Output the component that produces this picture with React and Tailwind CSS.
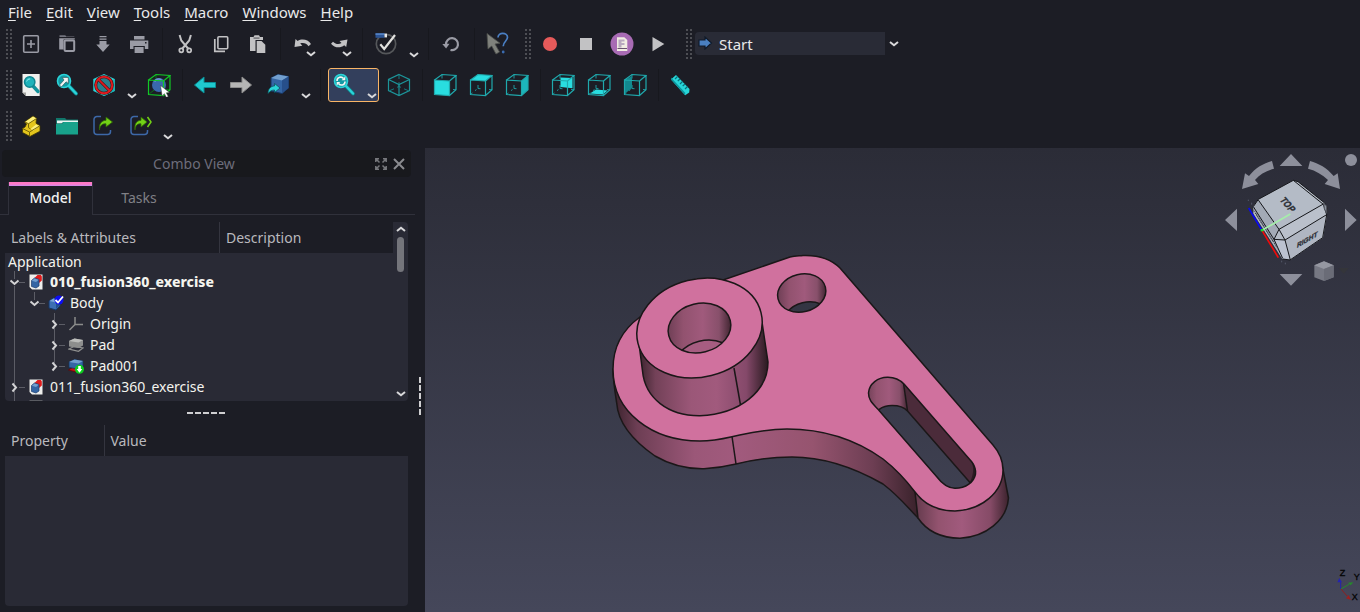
import React from "react";

/* ---------- toolbar icons, all drawn in a 24 x 24 box ---------- */

function Svg({ children, size = 24 }) {
  return (
    <svg width={size} height={size} viewBox="0 0 24 24" fill="none" aria-hidden="true" className="shrink-0">
      {children}
    </svg>
  );
}

const G = "#9a9ba5";
const L = "#c2c2c4";
const TEAL = "#2ad4d9";

const NewIcon = () => (
  <Svg>
    <rect x="4.700" y="3.800" width="14.600" height="16.400" rx="1" stroke={G} strokeWidth="1.600" />
    <path d="M12 8v8M8 12h8" stroke={G} strokeWidth="1.600" />
  </Svg>
);
const OpenIcon = () => (
  <Svg>
    <path d="M4.500 5V3.300h5.800l1 1.200h8V5z" fill="#72737d" />
    <path d="M4.200 6.200h15.600v1.200H8.600v10.200H4.200z" fill={G} />
    <rect x="9.600" y="8.600" width="9.600" height="10.400" rx="1" stroke={G} strokeWidth="2" />
  </Svg>
);
const SaveIcon = () => (
  <Svg>
    <path d="M8.500 4.700h7M8.500 7.200h7" stroke={G} strokeWidth="1.300" />
    <path d="M8.500 9h7v3.500h3.200L12 20 5.300 12.500h3.200z" fill={G} />
  </Svg>
);
const PrintIcon = () => (
  <Svg>
    <path d="M7 4h10.500v3.500H7zM3 8.500h18.300V17h-3.500v-3H6.500v3H3z" fill={G} />
    <rect x="7.600" y="15" width="9" height="6" fill={G} />
    <rect x="18" y="10" width="1.500" height="1.500" fill="#1c1d25" />
  </Svg>
);
const CutIcon = () => (
  <Svg>
    <path d="M6.600 3l1.700 5.500L15.500 17M17.900 3l-1.700 5.500L9 17" stroke={L} strokeWidth="2" />
    <circle cx="8.300" cy="18.300" r="2" stroke={L} strokeWidth="1.700" />
    <circle cx="16.200" cy="18.300" r="2" stroke={L} strokeWidth="1.700" />
  </Svg>
);
const CopyIcon = () => (
  <Svg>
    <rect x="8.900" y="4.700" width="9.800" height="12" rx="1" stroke={L} strokeWidth="1.600" />
    <path d="M5.800 7v12.300H16" stroke={L} strokeWidth="1.700" />
  </Svg>
);
const PasteIcon = () => (
  <Svg>
    <path d="M5 5h3.500l1-1.800h4.500l1 1.800H18v3h-7.500v11H5z" fill={L} />
    <path d="M11.700 9h4.800l3.800 3.800V21h-8.600z" fill={L} />
    <path d="M8.500 5.400h6v1.400h-6z" fill="#6a6a70" />
  </Svg>
);
const UndoIcon = () => (
  <Svg>
    <path d="M3.500 15l1-8 2.200 1.900C10.500 6.500 17 7 20 12l-2.500 2.300C15.500 11 12.500 10.300 9.200 11.300L11.300 13.700z" fill={L} />
  </Svg>
);
const RedoIcon = () => (
  <Svg>
    <path d="M20.500 7.500l-1.300 7.500-2-1.800C13.500 16.500 7.500 16 4 11.700l2-2C9 12.500 12 12.500 14.500 11l-2-2z" fill={L} />
  </Svg>
);
const CheckIcon = () => (
  <Svg>
    <circle cx="12" cy="12" r="9.700" stroke="#55575a" strokeWidth="1.700" />
    <path d="M1.500 1.300h9v4.500h-9z" fill="#2c5596" />
    <path d="M1.500 1.300h9v1.600h-9z" fill="#5684c4" />
    <path d="M10.500 1.600h2.500v3.800h-2.500z" fill="#e8e8e8" />
    <path d="M6.300 12.300L10.200 17 21 3" stroke="#e2e2df" strokeWidth="2.200" />
  </Svg>
);
const RefreshIcon = () => (
  <Svg>
    <path d="M7 12.500a6 6 0 1 1 4.500 5.500" stroke={G} strokeWidth="2.200" />
    <path d="M3.300 12l7.200-.3-3.400 4.700z" fill={G} />
  </Svg>
);
const WhatsThisIcon = () => (
  <Svg>
    <path d="M2 1.500l13 9.700-5 .8 4.500 8-3.500 2-4.300-8L3 17z" fill="#7f817c" stroke="#4d4f4b" strokeWidth=".8" />
    <path d="M13 5.500c0-5.800 9.500-5.300 9.500-.2 0 4-4.300 4-4.300 9" stroke="#4a7fc4" strokeWidth="1.700" />
    <circle cx="18.200" cy="20" r="1.400" fill="#3b6cb0" />
  </Svg>
);
const RecordIcon = () => (
  <Svg>
    <circle cx="12" cy="12" r="7" fill="#e65a5a" />
  </Svg>
);
const StopIcon = () => (
  <Svg>
    <path d="M6 6h12v12H6z" fill={L} />
  </Svg>
);
const MacroIcon = () => (
  <Svg>
    <circle cx="12" cy="12" r="11.500" fill="#a86bb4" />
    <path d="M7 5.300h7.300L17.300 8v11H7z" fill="#f1ece3" />
    <path d="M8.500 7.500h6v2h-3v1.500h3v2h-3v2.500h-3z" fill="#b9a9bf" />
    <path d="M7.500 16.500h9.500" stroke="#6a5470" />
  </Svg>
);
const PlayIcon = () => (
  <Svg>
    <path d="M6.500 5v14.200L18.300 12z" fill={L} />
  </Svg>
);

function Lens({ children, cx = 9, cy = 8 }) {
  return (
    <>
      <path d={`M${cx + 4} ${cy + 4}L${cx + 12} ${cy + 12.5}`} stroke="#0f7d86" strokeWidth="4" strokeLinecap="round" />
      <path d={`M${cx + 4} ${cy + 4}L${cx + 12} ${cy + 12.5}`} stroke={TEAL} strokeWidth="2.500" strokeLinecap="round" />
      <circle cx={cx} cy={cy} r="6.500" fill="#139aa3" stroke={TEAL} strokeWidth="1.600" />
      {children}
    </>
  );
}
const FitAllIcon = () => (
  <Svg>
    <path d="M3.500 1h17.200v22H7l-3.500-3.500z" fill="#f0f0ee" />
    <path d="M3.500 19.500H7V23z" fill="#a3a4a0" />
    <path d="M14 13l5 5.500" stroke="#12929b" strokeWidth="3.400" strokeLinecap="round" />
    <circle cx="10.700" cy="9" r="5.200" fill="#1fb3bb" stroke="#118690" strokeWidth="1.500" />
    <path d="M7.600 8.500c.5-1.800 2-2.700 3.600-2.500" stroke="#8ceaee" />
  </Svg>
);
const FitSelectionIcon = () => (
  <Svg>
    <Lens>
      <path d="M4.500 12l4.500-5L7.300 4.500h6v6l-2.200-1.700-4.800 5.200z" fill="#f4f5f4" stroke="#2c5053" strokeWidth=".6" />
    </Lens>
  </Svg>
);
const SyncViewIcon = () => (
  <Svg>
    <Lens>
      <path d="M5 8c0-4 4.500-5 6.500-2.500M13 8.500c0 4-4.500 4.500-6.500 2" stroke="#f4f5f4" strokeWidth="1.600" />
      <path d="M13.300 3.500v3.700H9.600zM4.700 12.500V9h3.600z" fill="#f4f5f4" />
    </Lens>
  </Svg>
);
const DrawStyleIcon = () => (
  <Svg>
    <path d="M12 1l10.700 5v12L12 23 1.300 18V6z" fill={TEAL} />
    <path d="M12 12v11l10.700-5V6z" fill="#18b3b9" />
    <circle cx="12" cy="12" r="7" fill="#2c7f8b" />
    <circle cx="12" cy="12" r="8.300" stroke="#4a0808" strokeWidth="3" />
    <path d="M6.200 6.200l11.600 11.600" stroke="#4a0808" strokeWidth="3" />
    <circle cx="12" cy="12" r="8.300" stroke="#e01b1f" strokeWidth="1.900" />
    <path d="M6.200 6.200l11.600 11.600" stroke="#e01b1f" strokeWidth="1.900" />
  </Svg>
);
const BoxSelectIcon = () => (
  <Svg>
    <path d="M9 1.500v14l-7.500 6M9 15.500l14 1.300" stroke="#086f1b" />
    <circle cx="12" cy="12" r="7" fill="#3a68ad" />
    <path d="M7.500 8.500c2-3 5-3 7-1.500" stroke="#6d97d2" strokeWidth="1.500" />
    <path d="M1.500 7l15 1v14.500l-15-1zM1.500 7L9 1.500l14 1L16.500 8M23 2.500v14.300l-6.500 5.700" stroke="#12c826" strokeWidth="1.200" />
    <path d="M13.500 12.500l9 7-3.200.3 2 3.700-2 .9-1.900-3.700-2.300 2.200z" fill="#fff" stroke="#333" strokeWidth=".5" />
  </Svg>
);
const BackIcon = () => (
  <Svg>
    <path d="M1.500 12L11 4v5.500h11.500v5H11V20z" fill="#1fc9ce" stroke="#0b8f97" />
  </Svg>
);
const ForwardIcon = () => (
  <Svg>
    <path d="M22.500 12L13 4v5.500H1.500v5H13V20z" fill="#b5b5b5" stroke="#8c8c8c" />
  </Svg>
);
const LinkNavIcon = () => (
  <Svg>
    <path d="M5 5l7-3.500 10.500 2V15L16 20.500 5 18z" fill="#3465a4" stroke="#16335d" />
    <path d="M5 5l7-3.500 10.500 2L16 7.500z" fill="#729fcf" />
    <path d="M16 7.500l6.500-4V15L16 20.500z" fill="#274f8a" />
    <path d="M2 20.500c0-5 3-7.500 6.500-7.500v-2.500L14 15l-5.500 4.500V17C6 17 4 18 2 20.500z" fill={TEAL} stroke="#0a4d54" strokeWidth=".7" />
  </Svg>
);
const IsoIcon = () => (
  <Svg>
    <path d="M12 2v4M12 9v4M3 17.500l4-1.700M21 17.500l-4-1.700M10 14.300l2-.8 2 .8" stroke="#15777d" />
    <path d="M12 1.500L22.500 6.500v11L12 22.500l-10.500-5v-11zM1.500 6.500L12 11.500l10.500-5M12 11.500v11" stroke="#1c9499" strokeWidth="1.200" />
  </Svg>
);

const FACES = {
  front: "M1.500 7l15 1v14.500l-15-1z",
  top: "M1.500 7L9 1.500l14 1L16.500 8z",
  right: "M16.500 8L23 2.500v14.300l-6.500 5.700z",
  rear: "M9.500 4.500l12 .5v10.300l-12-1.300z",
  bottom: "M3 20.500l6-4 11.500 1-4.500 4z",
  left: "M1.500 7L9 3v12l-7.500 6z",
};
function CubeIcon({ face }) {
  const fill = face === "left" ? "#12888e" : face === "right" ? "#1cb5bb" : "#29dde0";
  return (
    <Svg>
      <path d="M9 1.500v4M9 12v3.500M7.500 16.600l-1.500 1M3.500 20l-2 1.500M9 15.500l2.500.2M20 16.500l3 .3" stroke="#1c989d" />
      <path d={FACES[face]} fill={fill} />
      <path d="M1.500 7l15 1v14.500l-15-1zM1.500 7L9 1.500l14 1L16.500 8M23 2.500v14.300l-6.500 5.700" stroke="#1fa9ad" strokeWidth="1.200" />
    </Svg>
  );
}
const MeasureIcon = () => (
  <Svg>
    <path d="M2 6.500L7 2l13.500 14-.3 3.500-4 2.800z" fill="#27d6d9" />
    <path d="M2 6.500l14.200 15.800v-2.500L2 4.500z" fill="#0e939b" />
    <path d="M8.500 3.500L6 6M11 6L8.800 8M13.500 8.500L11 11M16 11l-2.300 2M18.500 13.500L16 16" stroke="#08727a" strokeWidth="1.200" />
  </Svg>
);
const PartIcon = () => (
  <Svg>
    <path d="M3.500 14.500L6 13l1.500-3L5.500 8 14 2l3.500 2.200-.5 5 4 2.500v5.500L11 22.500 3.500 18.500z" fill="#e3c51c" stroke="#3f3603" strokeWidth=".8" />
    <path d="M6 8l8-5.500 3.500 2L9.500 9.500zM11.500 15l5.500-4.500 3.500 1.500-6 4.500z" fill="#fdf07a" />
    <path d="M6 8l3.500 1.700v4l2 1.300M17.500 4.500l-8 5.200M3.500 14.500l7 3.500 10-6M10.500 18v4.500" stroke="#6b5b06" strokeWidth=".9" />
  </Svg>
);
const GroupIcon = () => (
  <Svg>
    <path d="M1 4h9l1.500 1.500H23V9H1z" fill="#11766a" />
    <path d="M2 6.500h21V8H8L6.500 9.500H2z" fill="#e9f5f2" />
    <path d="M1 9.500h6L9 8h14v12.500H1z" fill="#18a28b" />
  </Svg>
);
function LinkIcon({ extra }) {
  return (
    <Svg>
      <path d="M10 2.500H6a3 3 0 0 0-3 3v12a3 3 0 0 0 3 3h10.500a3 3 0 0 0 3-3V16" stroke="#3d68a8" strokeWidth="1.500" />
      <path
        d={
          extra
            ? "M7 16c-.8-6 1.500-9.500 6-9.700V3l6 5-6 5v-3.200c-4-.1-5.500 1.700-6 6.200z"
            : "M8.500 16c-.8-6 2-9.500 6.500-9.700V3l6.500 5-6.500 5v-3.200c-4-.1-6 1.700-6.500 6.200z"
        }
        fill="#73d216"
        stroke="#2f6605"
        strokeWidth=".8"
      />
      {extra && <path d="M19.500 3l3.500 5-3.500 5" stroke="#73d216" strokeWidth="1.500" />}
    </Svg>
  );
}

function Chevron({ className = "" }) {
  return (
    <svg width="10" height="6" viewBox="0 0 10 6" fill="none" aria-hidden="true" className={className}>
      <path d="M1 1l4 3.300L9 1" stroke="#d8d8da" strokeWidth="2" />
    </svg>
  );
}

/* ---------- toolbar building blocks ---------- */

function Grip() {
  return (
    <svg width="6" height="30" viewBox="0 0 6 30" aria-hidden="true" className="shrink-0">
      {[0, 4, 8, 12, 16, 20, 24, 28].map((y) => (
        <path key={y} d={`M0 ${y}h2v2H0zM4 ${y}h2v2H4z`} fill="#4d4e54" />
      ))}
    </svg>
  );
}

function Bar({ label, children }) {
  return (
    <div role="toolbar" aria-label={label} className="flex h-[41px] items-center gap-0.5 pr-[5px] pl-1.5">
      <Grip />
      {children}
    </div>
  );
}

function Sep() {
  return (
    <div className="flex w-2 justify-center">
      <div className="h-8 w-px bg-[#17181e]" />
    </div>
  );
}

function Btn({ label, children }) {
  return (
    <button type="button" aria-label={label} className="flex size-[34px] items-center justify-center rounded-sm">
      {children}
    </button>
  );
}

function CornerBtn({ label, children }) {
  return (
    <button type="button" aria-label={label} className="relative flex size-[34px] items-center justify-center rounded-sm">
      {children}
      <Chevron className="absolute right-1 bottom-1" />
    </button>
  );
}

function SplitBtn({ label, active, children }) {
  return (
    <button
      type="button"
      aria-label={label}
      className={
        "mr-px ml-0.5 flex h-[34px] w-[51px] items-center justify-between rounded-[3px] border pr-px pl-[3px] " +
        (active ? "border-[#f9b566] bg-[#333f5c]" : "border-transparent")
      }
    >
      {children}
      <Chevron className="mt-[22px]" />
    </button>
  );
}

/* ---------- tree ---------- */

function DocIcon({ grey }) {
  return (
    <svg width="14" height="16" viewBox="0 0 14 16" aria-hidden="true">
      <path d="M.5 .5h13v15H3L.5 13z" fill={grey ? "#8c8d90" : "#eeeeec"} />
      {!grey && (
        <>
          <path d="M5.500 4L8.500 1H12l.8 1.500v4L10 9z" fill="#e01b1b" />
          <path d="M2.500 6.500L5.500 4 10 5.500V12l-3 2-4.500-1.500z" fill="#3465a4" stroke="#1c3d6e" strokeWidth=".7" />
          <path d="M2.800 6.700l2.800-2.200L9.700 5.700 7 8z" fill="#729fcf" />
        </>
      )}
    </svg>
  );
}
const BodyIcon = () => (
  <svg width="16" height="16" viewBox="0 0 16 16" aria-hidden="true">
    <path d="M1 6l4-3 7 1v7l-4 4-7-2z" fill="#3d6fb3" stroke="#173562" />
    <path d="M1.500 6l4-2.500L11 4.500 8 7.500z" fill="#7aa5d8" />
    <path d="M8 7.500V14l3.500-3.500V5z" fill="#24508c" />
    <circle cx="11" cy="5" r="4.500" fill="#0d0df2" />
    <path d="M7.500 5l2.500 2.500L15 1.500" stroke="#fff" strokeWidth="1.800" fill="none" />
  </svg>
);
const OriginIcon = () => (
  <svg width="16" height="16" viewBox="0 0 16 16" fill="none" aria-hidden="true">
    <path d="M7 1v7.500h8M7 8.500L1.500 14" stroke="#8b8c8b" strokeWidth="1.500" />
  </svg>
);
const PadGreyIcon = () => (
  <svg width="16" height="16" viewBox="0 0 16 16" aria-hidden="true">
    <path d="M1 12l5-2.500L15 11l-4.500 3.300z" fill="none" stroke="#8f908f" strokeWidth="1.200" />
    <path d="M1 4l5.500-2.500L15 3v5.500L10.500 11 1 9.500z" fill="#8d8e8d" />
    <path d="M1 4l5.500-2.500L15 3l-4.500 2.500z" fill="#bcbdbb" />
  </svg>
);
const PadTipIcon = () => (
  <svg width="16" height="16" viewBox="0 0 16 16" aria-hidden="true">
    <path d="M.5 12l4-2.500h7L8 14z" fill="#c11414" stroke="#5c0606" strokeWidth=".7" />
    <path d="M1 4l5.500-2.500L15 3v5.500L10.500 11 1 9.500z" fill="#3465a4" stroke="#16335d" strokeWidth=".7" />
    <path d="M1 4l5.500-2.500L15 3l-4.500 2.500z" fill="#729fcf" />
    <circle cx="11.500" cy="11.300" r="4.500" fill="#0ccf1d" />
    <path d="M10.200 8h2.600v3h1.500l-2.800 3.800L8.700 11h1.500z" fill="#fff" />
  </svg>
);

/* One 20px indent cell of the tree: guide lines plus an optional arrow. */
function Cell({ kind = "", up, down }) {
  return (
    <svg width="20" height="21" viewBox="0 0 20 21" fill="none" aria-hidden="true" className="shrink-0">
      {up && <path d="M9.500 0v8" stroke="#5c5d66" />}
      {down && <path d="M9.500 15v6" stroke="#5c5d66" />}
      {kind === "line" && <path d="M9.500 0v21" stroke="#5c5d66" />}
      {(kind === "open" || kind === "closed") && <path d="M14 11.500h6" stroke="#5c5d66" />}
      {kind === "open" && <path d="M5.500 9.500l4 3.500 4-3.500" stroke="#d2d2d4" strokeWidth="2" />}
      {kind === "closed" && <path d="M7.500 7.500l3.500 4-3.500 4" stroke="#d2d2d4" strokeWidth="2" />}
    </svg>
  );
}

const ROWS = [
  { cells: [{ kind: "open", up: true, down: true }], icon: <DocIcon />, text: "010_fusion360_exercise", bold: true, level: 1 },
  { cells: [{ kind: "line" }, { kind: "open", up: true }], icon: <BodyIcon />, text: "Body", level: 2 },
  { cells: [{ kind: "line" }, {}, { kind: "closed", up: true, down: true }], icon: <OriginIcon />, text: "Origin", level: 3 },
  { cells: [{ kind: "line" }, {}, { kind: "closed", up: true, down: true }], icon: <PadGreyIcon />, text: "Pad", level: 3 },
  { cells: [{ kind: "line" }, {}, { kind: "closed", up: true }], icon: <PadTipIcon />, text: "Pad001", level: 3 },
  { cells: [{ kind: "closed", up: true, down: true }], icon: <DocIcon />, text: "011_fusion360_exercise", level: 1 },
  { cells: [{ kind: "line" }], icon: <DocIcon grey />, text: "", level: 1 },
];

function Tree() {
  return (
    <div className="mt-[7px] mr-[7px] ml-[5px] flex">
      <div className="flex min-w-0 flex-1 flex-col">
        <div className="flex h-[31px] text-[#b9b9bd]">
          <div className="flex w-[215px] items-center border-r border-[#34353f] pl-1.5">Labels &amp; Attributes</div>
          <div className="flex items-center pl-1.5">Description</div>
        </div>
        <div role="tree" aria-label="Model tree" className="h-[148px] overflow-hidden rounded-bl bg-[#292a35] text-[#f4f4ee]">
          <div className="flex h-[18px] items-center pl-[3px]">Application</div>
          {ROWS.map((r, i) => (
            <div role="treeitem" aria-level={r.level} key={i} className="flex h-[21px] items-center">
              {r.cells.map((c, j) => (
                <Cell key={j} {...c} />
              ))}
              <span className="flex w-[22px] justify-center">{r.icon}</span>
              <span className={r.bold ? "pl-[3px] font-extrabold" : "pl-[3px]"}>{r.text}</span>
            </div>
          ))}
        </div>
      </div>
      <div className="flex w-[15px] flex-col items-center justify-between rounded-r bg-[#292a35] py-1">
        <div className="flex flex-col items-center gap-[5px]">
          <Chevron className="rotate-180" />
          <div className="h-[35px] w-[7px] rounded-full bg-[#74757b]" />
        </div>
        <Chevron />
      </div>
    </div>
  );
}

function ComboView() {
  return (
    <aside className="flex w-[425px] shrink-0 text-sm">
      <div className="flex min-w-0 flex-1 flex-col pb-1.5">
        <div className="mt-0.5 mr-1 ml-0.5 flex h-[27px] items-center rounded bg-[#18191d] pr-[3px]">
          <h2 className="flex-1 pl-3.5 text-center text-[#6d6d7b]">Combo View</h2>
          <button type="button" aria-label="Float panel" className="flex w-[18px] justify-center">
            <svg width="12" height="12" viewBox="0 0 12 12" fill="none" stroke="#77787c" strokeWidth="1.500">
              <path d="M.8 4V.8H4M8 .8h3.200V4M11.200 8v3.200H8M4 11.200H.8V8M1 1l3.500 3.500M11 1L7.500 4.500M11 11L7.500 7.500M1 11l3.500-3.500" />
            </svg>
          </button>
          <button type="button" aria-label="Close panel" className="flex w-[18px] justify-center">
            <svg width="12" height="12" viewBox="0 0 12 12" fill="none" stroke="#8a8b8f" strokeWidth="2">
              <path d="M1 1l10 10M11 1L1 11" />
            </svg>
          </button>
        </div>
        <div role="tablist" className="mt-[5px] flex h-[33px]">
          <div className="w-2 border-b border-[#30313b]" />
          <button type="button" role="tab" aria-selected="true" className="flex w-[85px] flex-col border-x border-[#30313b] text-[#f2f2f2]">
            <span className="h-1 w-full bg-linear-to-b from-[#ff79c6] from-50% to-[#c78bf0]" />
            <span className="w-full pt-0.5 text-center font-medium">Model</span>
          </button>
          <button type="button" role="tab" aria-selected="false" className="flex w-[92px] flex-col border-b border-[#30313b] text-[#808086]">
            <span className="w-full pt-1.5 text-center">Tasks</span>
          </button>
          <div className="flex-1 border-b border-[#30313b]" />
        </div>
        <Tree />
        <div className="flex h-6 items-center justify-center gap-0.5 pr-1">
          {[0, 1, 2, 3, 4].map((i) => (
            <span key={i} className="h-0.5 w-1.5 bg-[#cfcfd1]" />
          ))}
        </div>
        <div className="mr-[7px] ml-[5px] flex flex-1 flex-col">
          <table className="w-full table-fixed text-left text-[#b9b9bd]">
            <thead>
              <tr className="h-[31px]">
                <th scope="col" className="w-[99px] border-r border-[#34353f] pl-1.5 font-normal">Property</th>
                <th scope="col" className="pl-1.5 font-normal">Value</th>
              </tr>
            </thead>
          </table>
          <div className="min-h-[149px] flex-1 rounded-b bg-[#292a35]" />
        </div>
      </div>
      <div className="flex w-2.5 flex-col items-center justify-center gap-0.5 pt-8">
        {[0, 1, 2, 3, 4].map((i) => (
          <span key={i} className="h-1.5 w-0.5 bg-[#cfcfd1]" />
        ))}
      </div>
    </aside>
  );
}

/* ---------- 3D view ---------- */

const EDGE = { stroke: "#1b1718", strokeWidth: 1.5, strokeLinejoin: "round" };

function Model() {
  return (
    <svg viewBox="425 148 935 464" aria-label="3D model" className="absolute inset-0 size-full">
      <defs>
        <linearGradient id="sideA" gradientUnits="userSpaceOnUse" x1="616" y1="0" x2="918" y2="0">
          <stop offset="0" stopColor="#3f2530" />
          <stop offset=".07" stopColor="#6d3e54" />
          <stop offset=".26" stopColor="#9b5778" />
          <stop offset=".4" stopColor="#a15a7d" />
          <stop offset=".65" stopColor="#96546f" />
          <stop offset=".85" stopColor="#6d3e53" />
          <stop offset="1" stopColor="#39222b" />
        </linearGradient>
        <linearGradient id="sideB" gradientUnits="userSpaceOnUse" x1="915" y1="0" x2="1009" y2="0">
          <stop offset="0" stopColor="#633a4c" />
          <stop offset=".25" stopColor="#93536f" />
          <stop offset=".5" stopColor="#a15a7d" />
          <stop offset=".8" stopColor="#864b67" />
          <stop offset="1" stopColor="#3a222c" />
        </linearGradient>
        <linearGradient id="boss" gradientUnits="userSpaceOnUse" x1="640" y1="0" x2="768" y2="0">
          <stop offset="0" stopColor="#3f2530" />
          <stop offset=".12" stopColor="#734158" />
          <stop offset=".4" stopColor="#9b5778" />
          <stop offset=".6" stopColor="#a15a7d" />
          <stop offset=".83" stopColor="#85496a" />
          <stop offset="1" stopColor="#2a1a20" />
        </linearGradient>
        <linearGradient id="bore">
          <stop offset="0" stopColor="#6d3e54" />
          <stop offset=".25" stopColor="#92526f" />
          <stop offset=".55" stopColor="#a05a7c" />
          <stop offset=".8" stopColor="#88506b" />
          <stop offset="1" stopColor="#3c222d" />
        </linearGradient>
        <linearGradient id="bg3d" gradientUnits="userSpaceOnUse" x1="0" y1="148" x2="0" y2="612">
          <stop offset="0" stopColor="#2b2c37" />
          <stop offset="1" stopColor="#45475a" />
        </linearGradient>
        <clipPath id="boreClip">
          <ellipse cx="699.500" cy="328" rx="31.700" ry="24.500" transform="rotate(-14 699.500 328)" />
        </clipPath>
        <clipPath id="holeClip">
          <ellipse cx="801.700" cy="293" rx="24.400" ry="18.900" transform="rotate(-14 801.700 293)" />
        </clipPath>
        <clipPath id="slotClip">
          <path d="M868.500 393C869 384 878 377 888 377.300 895 377.500 900 380 904 384L971.700 461.700C975 466 976 469 975.500 474 974 482 966 488.300 955 488.300 948 488 943 485 937 477L879.300 410.700C872 403 868.500 400 868.500 393z" />
        </clipPath>
      </defs>

      {/* plate walls */}
      <path
        d="M613 369C613 380 615 392 616.700 403 618 422 632 440 655 456 672 466 688 469 704 468.700 718 468 728 466 736 464 752 460 768 457 792 457 830 457 862 472 883 484 900 497 908 508 918 518L915 480 800 400z"
        fill="url(#sideA)"
        {...EDGE}
      />
      <path
        d="M915 492L918 518C926 530 940 538 960 538.200 986 537 1007 520 1008.500 498L1002.500 467z"
        fill="url(#sideB)"
        {...EDGE}
      />
      <path d="M732 436.500L736 464" {...EDGE} />

      {/* plate top */}
      <path
        d="M640 317C622 330 613 348 613 369 613 412 652 441 700 441 713 441 722 439 732 436.700 750 433 765 429 787 429 830 429 862 444 883 459 897 470 906 480 915 492 924 504 938 511 955 511 982 510 1003 492 1003 470 1003 460 1000 453 993 445L840 268C831 259 817 255 803 255.500 798 256 795 256 790 257L723 280z"
        fill="#d0719e"
        {...EDGE}
      />

      {/* boss */}
      <path
        d="M637.500 332L642.500 371C645 398 668 416 700 415.700 740 414 768 391 768 362L762 322z"
        fill="url(#boss)"
        {...EDGE}
      />
      <path d="M734 368L740.500 405" {...EDGE} />
      <ellipse cx="699.500" cy="328" rx="63.400" ry="49" transform="rotate(-14 699.500 328)" fill="#d0719e" {...EDGE} />
      <g clipPath="url(#boreClip)">
        <path d="M667 300h65v56h-65z" fill="url(#bore)" />
        <ellipse cx="705" cy="365" rx="31.700" ry="24.500" transform="rotate(-14 705 365)" fill="#a65d81" {...EDGE} />
      </g>
      <ellipse cx="699.500" cy="328" rx="31.700" ry="24.500" transform="rotate(-14 699.500 328)" fill="none" {...EDGE} />

      {/* through hole */}
      <g clipPath="url(#holeClip)">
        <path d="M777 272h50v42h-50z" fill="url(#bore)" />
        <ellipse cx="807" cy="321" rx="24.400" ry="18.900" transform="rotate(-14 807 321)" fill="url(#bg3d)" {...EDGE} />
      </g>
      <ellipse cx="801.700" cy="293" rx="24.400" ry="18.900" transform="rotate(-14 801.700 293)" fill="none" {...EDGE} />

      {/* slot */}
      <g clipPath="url(#slotClip)">
        <path d="M866 375h112v115H866z" fill="#4b2b3a" />
        <path d="M866 375h37.500L908 412H866z" fill="url(#bore)" />
        <path
          d="M874 420C874 411 882 405.500 892 405.500 899 405.500 904 407 907.500 411L969.500 482 976 500 930 495z"
          fill="url(#bg3d)"
          {...EDGE}
        />
        <path d="M903.500 383L907.500 411" {...EDGE} />
        <path d="M971 461c3 5 3 13-1 21l8 0v-21z" fill="#2c1a22" />
      </g>
      <path
        d="M868.500 393C869 384 878 377 888 377.300 895 377.500 900 380 904 384L971.700 461.700C975 466 976 469 975.500 474 974 482 966 488.300 955 488.300 948 488 943 485 937 477L879.300 410.700C872 403 868.500 400 868.500 393z"
        fill="none"
        {...EDGE}
      />
    </svg>
  );
}

function NavCube() {
  const arrow = "#8d8f9b";
  const line = { stroke: "#15161a", strokeWidth: 3, fill: "none", strokeLinejoin: "round" };
  const face = { fontFamily: "Liberation Sans, sans-serif", fontWeight: 700, fill: "#2b2e35", stroke: "#2b2e35" };
  return (
    <svg width="150" height="148" viewBox="0 6 450 444" aria-label="Navigation cube" className="absolute top-0 right-0">
      <g fill={arrow}>
        <path d="M243 24l34 36h-68zM243 419l34-35h-68zM45 222l36-34v67zM440 222l-35-34v67z" />
        <path d="M186 45l6 23c-24 6-43 18-57 34l10 12-49 15 9-47 12 8c19-24 43-38 69-45z" />
        <path d="M300 45l-6 23c24 6 43 18 60 34l-10 12 46 15-7-47-12 8c-20-24-45-38-71-45z" />
        <circle cx="423" cy="42" r="18" />
      </g>
      <path d="M385 366h32l-16 17z" fill="#34353a" />
      <path d="M342 346l29 12v36l-29 11-29-11v-36z" fill="#767883" />
      <path d="M342 346l29 12-29 11-29-11z" fill="#9597a1" />
      <path d="M371 358v36l-29 11v-36z" fill="#6a6c77" />

      <path d="M145 160L250 103l14 4 80 64 8 14-1 22-12 68-98 67-24-3L130 203v-22z" fill="#b4bbc6" />
      <path d="M145 162l62 88-15 30-62-98z" fill="#a3aab6" />
      <path d="M130 184l62 96 26 57-78-126z" fill="#9299a6" />
      <path d="M192 280l33 2 15 58-22-3z" fill="#bcc2d0" />
      <path d="M225 282l124-75-11 68-97 66z" fill="#b0b6c2" />
      <path d="M207 250l133-74 10 31-125 74z" fill="#bac0cb" />
      <path d="M130 182l15-22L250 103l14 4 80 64 8 14-2 22-12 68-98 67-22-3M145 162l62 88 133-76M250 103l90 72 10 31M225 282l125-76M207 250l-15 30 33 2 16 60M207 250l18 32M192 280l26 57M130 182l62 98" {...line} />
      <path d="M341 172l9 8v22l-7-14z" stroke="#4b4e57" strokeWidth="3" fill="#8b919d" />
      <path d="M138 203l62 100M131 194l58 92" stroke="#3c3f47" strokeWidth="3" strokeDasharray="4 4" />
      <path d="M115 161v4M125 170v6M215 344v5M226 350v5" stroke="#55586a" strokeWidth="3" />
      <text transform="matrix(.6 .68 -.98 .52 208 162)" fontSize="27" {...face}>TOP</text>
      <text transform="matrix(.9 -.52 -.12 1 260 306)" fontSize="22" {...face}>RIGHT</text>
      <path d="M116 186l39 66" stroke="#0a0af0" strokeWidth="5" />
      <path d="M156 253l49 82" stroke="#f20a0a" strokeWidth="5" />
      <path d="M156 253l85-49" stroke="#a5eeaa" strokeWidth="5" />
      <path d="M152 249h8v7h-8z" fill="#18e02a" />
    </svg>
  );
}

function Axes() {
  return (
    <svg width="60" height="62" viewBox="0 0 180 186" aria-label="Axis cross" className="absolute right-0 bottom-0">
      <path d="M122 117V94" stroke="#2424a8" strokeWidth="3" />
      <path d="M118 84l8 13h-14z" fill="#2424b0" />
      <path d="M123 117l24-14" stroke="#258a2b" strokeWidth="3" />
      <path d="M160 97l-8 9-8-8z" fill="#258a2b" />
      <path d="M123 117l18 21" stroke="#8d2020" strokeWidth="3" />
      <path d="M153 150l-15-5 8-10z" fill="#9a2020" />
      <g fontFamily="Liberation Sans, sans-serif" fontSize="27" fill="#050505" stroke="#050505" strokeWidth="1">
        <text x="119" y="78">Z</text>
        <text x="161" y="91">Y</text>
        <text x="155" y="150">X</text>
      </g>
    </svg>
  );
}

/* ---------- page ---------- */

const MENU = ["File", "Edit", "View", "Tools", "Macro", "Windows", "Help"];

export default function App() {
  return (
    <div className="flex min-h-screen flex-col bg-[#1c1d25] font-['Noto_Sans',sans-serif] text-[15px] leading-5 text-[#e9e9ea]">
      <nav aria-label="Main menu" className="flex h-[23px] items-center gap-3.5 pt-px pl-2">
        {MENU.map((m) => (
          <button type="button" key={m}>
            <span className="underline underline-offset-2">{m[0]}</span>
            {m.slice(1)}
          </button>
        ))}
      </nav>

      <div className="flex">
        <Bar label="File">
          <Btn label="New"><NewIcon /></Btn>
          <Btn label="Open"><OpenIcon /></Btn>
          <Btn label="Save"><SaveIcon /></Btn>
          <Btn label="Print"><PrintIcon /></Btn>
          <Sep />
          <Btn label="Cut"><CutIcon /></Btn>
          <Btn label="Copy"><CopyIcon /></Btn>
          <Btn label="Paste"><PasteIcon /></Btn>
          <Sep />
          <CornerBtn label="Undo"><UndoIcon /></CornerBtn>
          <CornerBtn label="Redo"><RedoIcon /></CornerBtn>
          <Sep />
          <SplitBtn label="Validate"><CheckIcon /></SplitBtn>
          <Sep />
          <Btn label="Refresh"><RefreshIcon /></Btn>
          <Sep />
          <Btn label="What's this?"><WhatsThisIcon /></Btn>
        </Bar>
        <Bar label="Macro">
          <Btn label="Record macro"><RecordIcon /></Btn>
          <Btn label="Stop macro"><StopIcon /></Btn>
          <Btn label="Macros"><MacroIcon /></Btn>
          <Btn label="Run macro"><PlayIcon /></Btn>
        </Bar>
        <Bar label="Workbench">
          <div className="relative ml-px flex items-center gap-1">
            <select aria-label="Workbench" defaultValue="Start" className="h-[23px] w-[190px] appearance-none rounded-l-sm bg-[#292b36] pl-6">
              <option>Start</option>
            </select>
            <Chevron />
            <svg width="15" height="14" viewBox="0 0 15 14" aria-hidden="true" className="pointer-events-none absolute top-1 left-[3px]">
              <path d="M1 4h6V1l6.500 6L7 13v-3H1z" fill="#4a80c2" stroke="#101a2a" strokeWidth="1.200" />
            </svg>
          </div>
        </Bar>
      </div>

      <div className="flex">
        <Bar label="View">
          <Btn label="Fit all"><FitAllIcon /></Btn>
          <Btn label="Fit selection"><FitSelectionIcon /></Btn>
          <SplitBtn label="Draw style"><DrawStyleIcon /></SplitBtn>
          <Btn label="Box selection"><BoxSelectIcon /></Btn>
          <Sep />
          <Btn label="Back"><BackIcon /></Btn>
          <Btn label="Forward"><ForwardIcon /></Btn>
          <SplitBtn label="Go to linked object"><LinkNavIcon /></SplitBtn>
          <Sep />
          <SplitBtn label="Sync view" active><SyncViewIcon /></SplitBtn>
          <Btn label="Isometric"><IsoIcon /></Btn>
          <Sep />
          <Btn label="Front"><CubeIcon face="front" /></Btn>
          <Btn label="Top"><CubeIcon face="top" /></Btn>
          <Btn label="Right"><CubeIcon face="right" /></Btn>
          <Sep />
          <Btn label="Rear"><CubeIcon face="rear" /></Btn>
          <Btn label="Bottom"><CubeIcon face="bottom" /></Btn>
          <Btn label="Left"><CubeIcon face="left" /></Btn>
          <Sep />
          <Btn label="Measure"><MeasureIcon /></Btn>
        </Bar>
      </div>

      <div className="flex">
        <Bar label="Structure">
          <Btn label="Create part"><PartIcon /></Btn>
          <Btn label="Create group"><GroupIcon /></Btn>
          <Btn label="Make link"><LinkIcon /></Btn>
          <SplitBtn label="Link actions"><LinkIcon extra /></SplitBtn>
        </Bar>
      </div>

      <div className="flex flex-1 pt-0.5">
        <ComboView />
        <main className="relative flex-1 bg-linear-to-b from-[#2b2c37] to-[#45475a]">
          <Model />
          <NavCube />
          <Axes />
        </main>
      </div>
    </div>
  );
}
